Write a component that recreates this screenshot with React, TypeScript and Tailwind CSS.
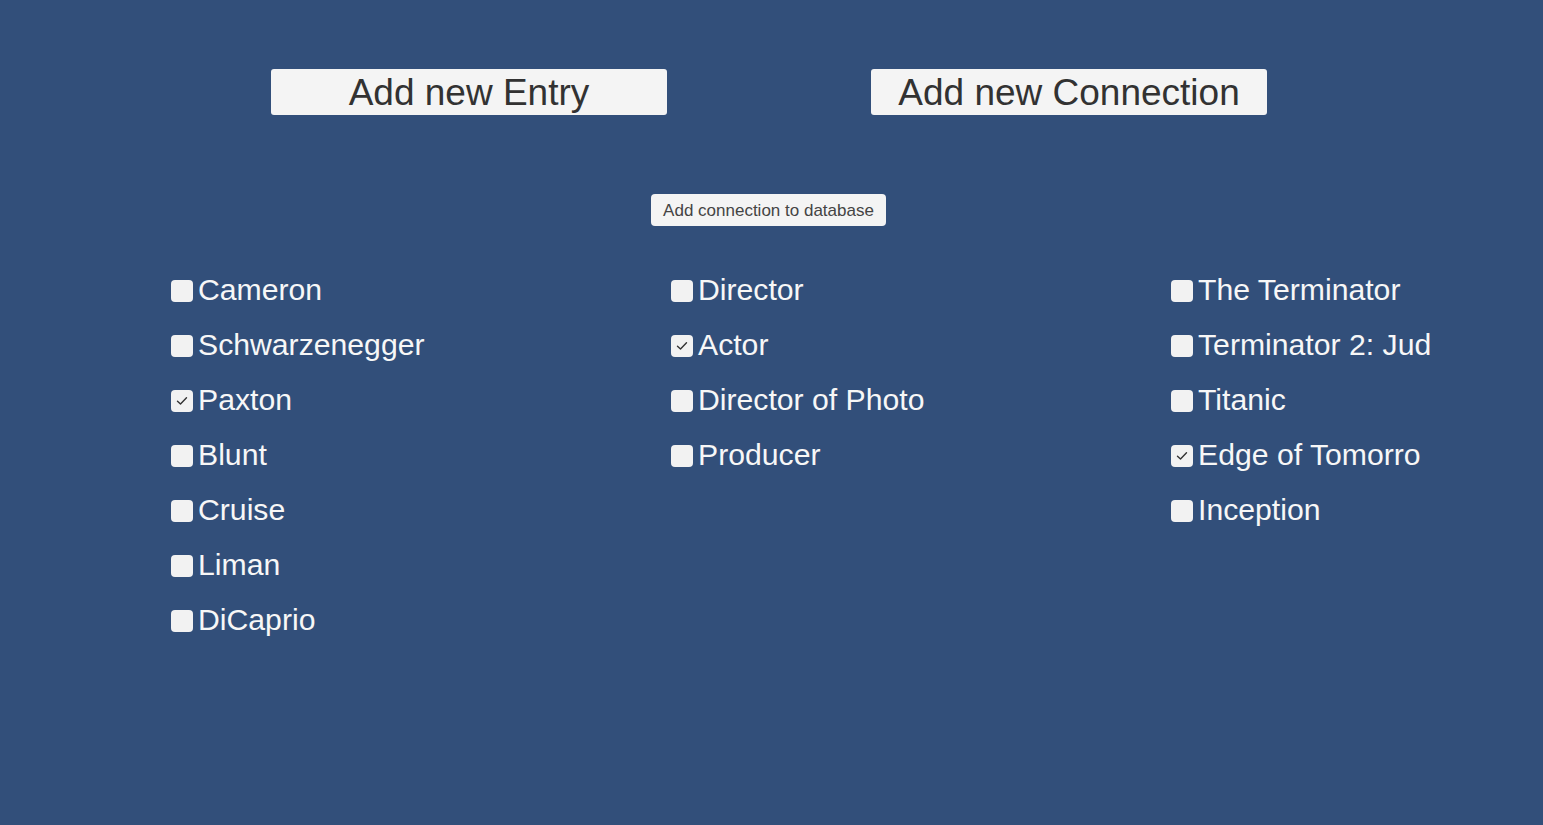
import React from "react";

type Item = { label: string; checked?: boolean };

const col1: Item[] = [
  { label: "Cameron" },
  { label: "Schwarzenegger" },
  { label: "Paxton", checked: true },
  { label: "Blunt" },
  { label: "Cruise" },
  { label: "Liman" },
  { label: "DiCaprio" },
];
const col2: Item[] = [
  { label: "Director" },
  { label: "Actor", checked: true },
  { label: "Director of Photo" },
  { label: "Producer" },
];
const col3: Item[] = [
  { label: "The Terminator" },
  { label: "Terminator 2: Jud" },
  { label: "Titanic" },
  { label: "Edge of Tomorro", checked: true },
  { label: "Inception" },
];

function Check({ item }: { item: Item }) {
  return (
    <div className="flex h-[55px] items-center">
      <div className="flex h-[22px] w-[22px] items-center justify-center rounded-[4px] bg-[#f2f2f2]">
        {item.checked && (
          <svg width="12" height="10" viewBox="0 0 12 10" fill="none">
            <path d="M1.5 5.2 L4.5 8 L10.5 1.8" stroke="#333" strokeWidth="1.4" strokeLinecap="round" strokeLinejoin="round" />
          </svg>
        )}
      </div>
      <span className="ml-[5px] whitespace-nowrap text-[30.2px] leading-none text-[#f7f7f7]">{item.label}</span>
    </div>
  );
}

export default function App() {
  return (
    <div
      className="h-[825px] w-[1543px] overflow-hidden bg-[#324f7a]"
      style={{ fontFamily: '"Liberation Sans", Arial, sans-serif' }}
    >
      <div className="flex pl-[271px] pt-[69px] gap-[204px]">
        <button className="flex h-[46px] w-[396px] items-center justify-center rounded-[3px] bg-[#f4f4f4] text-[37px] leading-none text-[#323232]">
          Add new Entry
        </button>
        <button className="flex h-[46px] w-[396px] items-center justify-center rounded-[3px] bg-[#f4f4f4] text-[37px] leading-none text-[#323232]">
          Add new Connection
        </button>
      </div>
      <div className="flex pl-[651px] pt-[79px]">
        <button className="flex h-[32px] w-[235px] items-center justify-center rounded-[4px] bg-[#f4f4f4] text-[17px] leading-none text-[#444444]">
          Add connection to database
        </button>
      </div>
      <div className="grid grid-cols-[500px_500px_372px] pl-[171px] pt-[37px]">
        <div className="flex flex-col">
          {col1.map((i) => (
            <Check key={i.label} item={i} />
          ))}
        </div>
        <div className="flex flex-col">
          {col2.map((i) => (
            <Check key={i.label} item={i} />
          ))}
        </div>
        <div className="flex flex-col">
          {col3.map((i) => (
            <Check key={i.label} item={i} />
          ))}
        </div>
      </div>
    </div>
  );
}
